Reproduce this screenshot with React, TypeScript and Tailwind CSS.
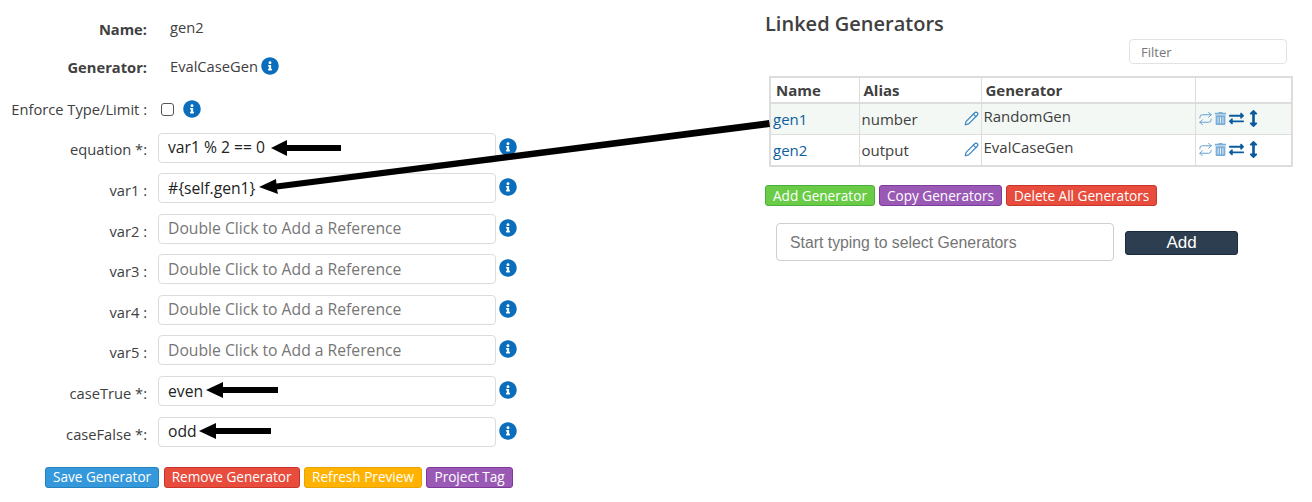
import { FaInfoCircle, FaExchangeAlt, FaArrowsAltV, FaTrashAlt } from 'react-icons/fa'
import { Pencil, Repeat } from 'lucide-react'

const fields = [
  { label: 'equation *:', value: 'var1 % 2 == 0' },
  { label: 'var1 :', value: '#{self.gen1}' },
  { label: 'var2 :', value: '' },
  { label: 'var3 :', value: '' },
  { label: 'var4 :', value: '' },
  { label: 'var5 :', value: '' },
  { label: 'caseTrue *:', value: 'even' },
  { label: 'caseFalse *:', value: 'odd' },
]

const generators = [
  { name: 'gen1', alias: 'number', type: 'RandomGen', rowClass: 'h-[31px] bg-[#f3f8f4]' },
  { name: 'gen2', alias: 'output', type: 'EvalCaseGen', rowClass: 'h-[32px] bg-white' },
]

function Info({ className = '' }: { className?: string }) {
  return <FaInfoCircle className={`text-[#0a6ebd] text-[18px] ${className}`} />
}

function Btn({ label, className }: { label: string; className: string }) {
  return (
    <button className={`h-[21px] rounded-[3px] border px-[7px] text-[13.6px] leading-none text-white ${className}`}>
      {label}
    </button>
  )
}

export default function App() {
  return (
    <div className="relative flex h-[502px] w-[1312px] overflow-hidden bg-white font-['Open_Sans',sans-serif] text-[#404040]">
      {/* generator form */}
      <div className="w-[765px] shrink-0 pt-[18px]">
        <div className="flex h-[22px] items-center">
          <div className="w-[147px] text-right text-[14.7px] font-bold">Name:</div>
          <div className="ml-[23px] text-[14.7px] -translate-y-[2px]">gen2</div>
        </div>
        <div className="mt-[16px] flex h-[22px] items-center">
          <div className="w-[147px] text-right text-[14.7px] font-bold">Generator:</div>
          <div className="ml-[23px] flex items-center gap-[3px] text-[14.7px] -translate-y-[1px]">
            EvalCaseGen <Info />
          </div>
        </div>
        <div className="mt-[20px] flex h-[22px] items-center">
          <div className="w-[147px] text-right text-[14.7px]">Enforce Type/Limit :</div>
          <input type="checkbox" className="ml-[14px] h-[13px] w-[13px] appearance-none rounded-[3px] border-[1.5px] border-[#555]" />
          <Info className="ml-[9px]" />
        </div>
        <div className="mt-[12.5px] flex flex-col gap-[10.6px]">
          {fields.map(f => (
            <div key={f.label} className="flex h-[30px] items-center">
              <div className="w-[147px] text-right text-[14.7px] translate-y-[2px]">{f.label}</div>
              <input
                readOnly
                value={f.value}
                placeholder="Double Click to Add a Reference"
                className="ml-[11px] h-[30px] w-[338px] rounded-[4px] border border-[#dcdcdc] bg-white px-[9px] pb-[1px] text-[15.7px] text-[#222] outline-none placeholder:text-[#767676]"
              />
              <Info className="ml-[3px] -translate-y-[1px]" />
            </div>
          ))}
        </div>
        <div className="ml-[45px] mt-[20px] flex gap-[4.5px]">
          <Btn label="Save Generator" className="border-[#2580bd] bg-[#3498db]" />
          <Btn label="Remove Generator" className="border-[#c9352b] bg-[#e74c3c]" />
          <Btn label="Refresh Preview" className="border-[#e8a500] bg-[#ffb300]" />
          <Btn label="Project Tag" className="border-[#7d3a9a] bg-[#9b59b6]" />
        </div>
      </div>

      {/* linked generators */}
      <div className="flex-1 pt-[10px]">
        <h2 className="text-[20px] font-semibold leading-[28px]">Linked Generators</h2>
        <div className="mr-[25px] mt-[1px] flex justify-end">
          <input
            readOnly
            placeholder="Filter"
            className="h-[25px] w-[158px] rounded-[4px] border border-[#e2e2e2] px-[11px] text-[13px] outline-none placeholder:text-[#777]"
          />
        </div>
        <table className="ml-[4px] mt-[12px] w-[524px] table-fixed border-collapse border-2 border-[#dddddd] text-[15px]">
          <thead>
            <tr className="h-[26px] border-b-2 border-[#dddddd] text-left font-bold">
              <th className="w-[89px] border-r border-[#dddddd] pl-[5px]">Name</th>
              <th className="w-[122px] border-r border-[#dddddd] pl-[4px]">Alias</th>
              <th className="w-[214px] border-r border-[#dddddd] pl-[4px]">Generator</th>
              <th />
            </tr>
          </thead>
          <tbody>
            {generators.map(g => (
              <tr key={g.name} className={`border-b border-[#dddddd] ${g.rowClass}`}>
                <td className="border-r border-[#dddddd] pl-[2px] text-[#0d5f9f]">{g.name}</td>
                <td className="border-r border-[#dddddd] pl-[2px]">
                  <div className="flex items-center justify-between pr-[2px]">
                    {g.alias}
                    <Pencil size={15} strokeWidth={2} className="text-[#3d87c4]" />
                  </div>
                </td>
                <td className="border-r border-[#dddddd] pl-[2px]">
                  <div className="-translate-y-[3.5px]">{g.type}</div>
                </td>
                <td className="pl-[2px]">
                  <div className="flex items-center">
                    <Repeat size={15} strokeWidth={1.5} className="text-[#5b9bd0]" />
                    <FaTrashAlt className="ml-[1px] text-[13px] text-[#7aaed8]" />
                    <FaExchangeAlt className="ml-[2px] text-[15px] text-[#0b5c9e]" />
                    <FaArrowsAltV className="ml-[1px] text-[17px] text-[#0b5c9e]" />
                  </div>
                </td>
              </tr>
            ))}
          </tbody>
        </table>
        <div className="mt-[18px] flex gap-[4px]">
          <Btn label="Add Generator" className="border-[#4cae3a] bg-[#6acc46]" />
          <Btn label="Copy Generators" className="border-[#7d3a9a] bg-[#9b59b6]" />
          <Btn label="Delete All Generators" className="border-[#c9352b] bg-[#e74c3c]" />
        </div>
        <div className="ml-[11px] mt-[17px] flex items-center">
          <input
            readOnly
            placeholder="Start typing to select Generators"
            className="h-[38px] w-[338px] rounded-[4px] border border-[#cfcfcf] px-[13px] pt-[1px] font-['Liberation_Sans',sans-serif] text-[15.8px] outline-none placeholder:text-[#757575]"
          />
          <button className="ml-[11px] mt-[1px] h-[24px] w-[113px] rounded-[3px] border border-[#1a2c3d] bg-[#2c3e50] font-['Liberation_Sans',sans-serif] text-[17px] leading-none text-white">
            Add
          </button>
        </div>
      </div>

      {/* annotation arrows drawn on top of the screenshot */}
      <svg className="pointer-events-none absolute left-0 top-0" width="1312" height="502">
        <path d="M271 148 L287 140 V145 H341 V151 H287 V156 Z" fill="#000" />
        <path d="M259 187 L276 179 L276.4 183.6 L769 120 L770 127 L277 189.5 L278 194 Z" fill="#000" />
        <path d="M206 390 L223 382 V387 H278 V393 H223 V398 Z" fill="#000" />
        <path d="M199 431 L216 423 V428 H271 V434 H216 V439 Z" fill="#000" />
      </svg>
    </div>
  )
}
